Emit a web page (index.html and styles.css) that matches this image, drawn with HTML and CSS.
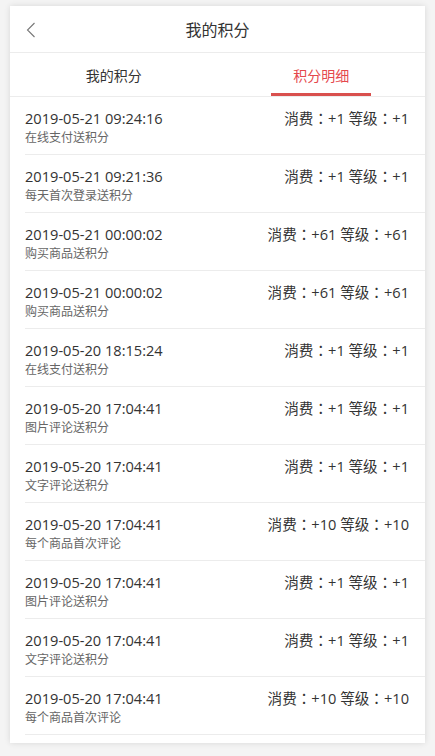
FILE: index.html
```html
<!DOCTYPE html>
<html lang="zh-CN">
<head>
    <meta charset="UTF-8">
    <meta name="viewport" content="width=device-width, initial-scale=1.0">
    <title>我的积分</title>
    <link rel="stylesheet" href="styles.css">
</head>
<body>
    <div class="page">
        <div class="header">
            <span class="back">
                <svg width="10" height="16" viewBox="0 0 10 16"><path d="M8.5 1 L1.5 8 L8.5 15" fill="none" stroke="#777" stroke-width="1.1"/></svg>
            </span>
            <h1>我的积分</h1>
        </div>

        <div class="tabs">
            <div class="tab">我的积分</div>
            <div class="tab active">积分明细</div>
        </div>

        <!-- zh-Hant on the points keeps the full-width colon centred -->
        <ul class="list">
            <li class="row">
                <div class="info"><div class="time">2019-05-21 09:24:16</div><div class="desc">在线支付送积分</div></div>
                <div class="points" lang="zh-Hant">消费：+1 等级：+1</div>
            </li>
            <li class="row">
                <div class="info"><div class="time">2019-05-21 09:21:36</div><div class="desc">每天首次登录送积分</div></div>
                <div class="points" lang="zh-Hant">消费：+1 等级：+1</div>
            </li>
            <li class="row">
                <div class="info"><div class="time">2019-05-21 00:00:02</div><div class="desc">购买商品送积分</div></div>
                <div class="points" lang="zh-Hant">消费：+61 等级：+61</div>
            </li>
            <li class="row">
                <div class="info"><div class="time">2019-05-21 00:00:02</div><div class="desc">购买商品送积分</div></div>
                <div class="points" lang="zh-Hant">消费：+61 等级：+61</div>
            </li>
            <li class="row">
                <div class="info"><div class="time">2019-05-20 18:15:24</div><div class="desc">在线支付送积分</div></div>
                <div class="points" lang="zh-Hant">消费：+1 等级：+1</div>
            </li>
            <li class="row">
                <div class="info"><div class="time">2019-05-20 17:04:41</div><div class="desc">图片评论送积分</div></div>
                <div class="points" lang="zh-Hant">消费：+1 等级：+1</div>
            </li>
            <li class="row">
                <div class="info"><div class="time">2019-05-20 17:04:41</div><div class="desc">文字评论送积分</div></div>
                <div class="points" lang="zh-Hant">消费：+1 等级：+1</div>
            </li>
            <li class="row">
                <div class="info"><div class="time">2019-05-20 17:04:41</div><div class="desc">每个商品首次评论</div></div>
                <div class="points" lang="zh-Hant">消费：+10 等级：+10</div>
            </li>
            <li class="row">
                <div class="info"><div class="time">2019-05-20 17:04:41</div><div class="desc">图片评论送积分</div></div>
                <div class="points" lang="zh-Hant">消费：+1 等级：+1</div>
            </li>
            <li class="row">
                <div class="info"><div class="time">2019-05-20 17:04:41</div><div class="desc">文字评论送积分</div></div>
                <div class="points" lang="zh-Hant">消费：+1 等级：+1</div>
            </li>
            <li class="row">
                <div class="info"><div class="time">2019-05-20 17:04:41</div><div class="desc">每个商品首次评论</div></div>
                <div class="points" lang="zh-Hant">消费：+10 等级：+10</div>
            </li>
        </ul>
    </div>
</body>
</html>
```

FILE: styles.css
```css
body {
    margin: 0;
    padding: 6px 10px;
    background-color: #f4f4f4;
    font-family: 'Open Sans', 'Noto Sans CJK SC', sans-serif;
    color: #333;
}

.page {
    width: 415px;
    height: 737px;
    background-color: #fff;
    box-shadow: 0 0 6px rgba(0, 0, 0, 0.12);
    overflow: hidden;
}

.header {
    position: relative;
    height: 46px;
    display: flex;
    justify-content: center;
    align-items: center;
    border-bottom: 1px solid #ececec;
}

.back {
    position: absolute;
    left: 16px;
    top: 16px;
    line-height: 0;
}

h1 {
    margin: 0;
    font-size: 16px;
    font-weight: normal;
    color: #333;
}

.tabs {
    display: flex;
    height: 43px;
    border-bottom: 1px solid #ececec;
}

.tab {
    flex: 1;
    display: flex;
    justify-content: center;
    align-items: center;
    font-size: 14px;
    color: #333;
    position: relative;
}

.tab.active {
    color: #e5484d;
}

.tab.active::after {
    content: "";
    position: absolute;
    bottom: 0;
    left: 50%;
    width: 100px;
    margin-left: -50px;
    height: 3px;
    background-color: #d9504e;
}

.list {
    list-style: none;
    margin: 0;
    padding: 0;
}

.row {
    display: flex;
    justify-content: space-between;
    align-items: flex-start;
    height: 47px;
    margin-left: 15px;
    padding: 10px 16px 0 0;
    border-bottom: 1px solid #ececec;
}

.time {
    font-size: 14.6px;
    line-height: 22px;
    color: #333;
}

.desc {
    font-size: 12px;
    line-height: 18px;
    color: #666;
}

.points {
    font-family: 'Open Sans', 'Noto Sans CJK TC', sans-serif;
    font-size: 14.6px;
    line-height: 22px;
    color: #333;
}
```
